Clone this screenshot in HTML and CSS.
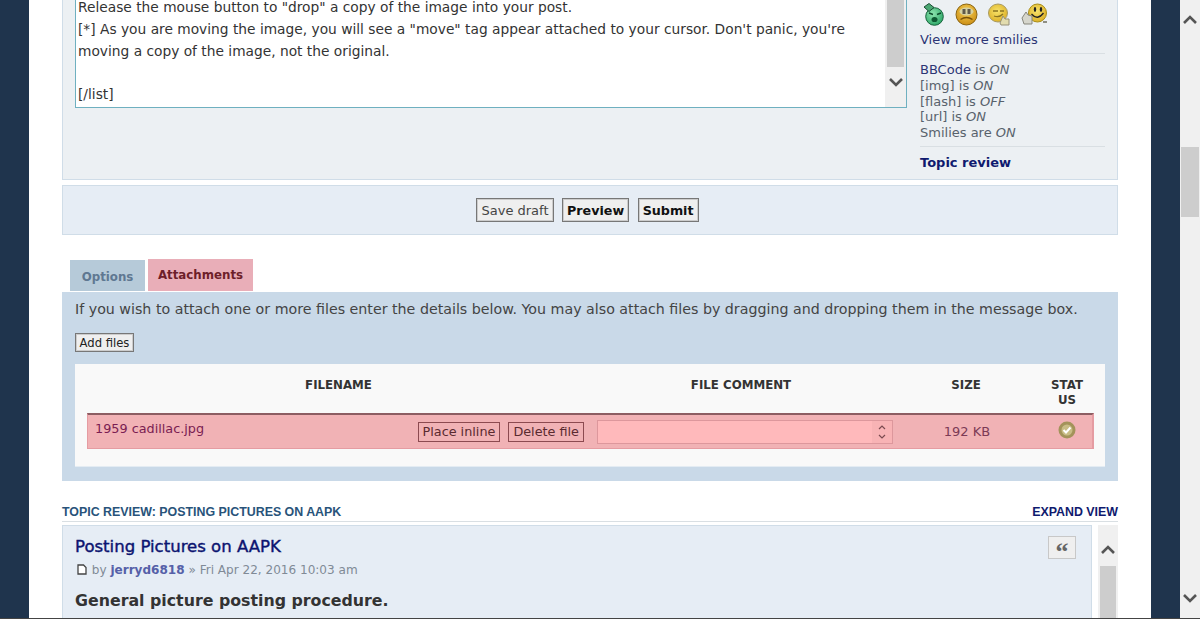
FILE: index.html
```html
<!DOCTYPE html>
<html lang="en">
<head>
    <meta charset="UTF-8">
    <meta name="viewport" content="width=device-width, initial-scale=1.0">
    <title>Post a reply</title>
    <link rel="stylesheet" href="styles.css">
</head>
<body>
<div class="page">
    <div class="side"></div>
    <div class="wrap">
        <!-- message box and smilies -->
        <div class="panel postPanel">
            <div class="message">
                <div class="messageText">
                    <p>Release the mouse button to "drop" a copy of the image into your post.</p>
                    <p>[*] As you are moving the image, you will see a "move" tag appear attached to your cursor. Don't panic, you're moving a copy of the image, not the original.</p>
                    <p>&nbsp;</p>
                    <p>[/list]</p>
                </div>
                <div class="miniScroll">
                    <div class="miniThumb"></div>
                    <svg class="arrow" width="16" height="10" viewBox="0 0 16 10"><path d="M2 2 L8 8 L14 2" fill="none" stroke="#555" stroke-width="2.6"/></svg>
                </div>
            </div>
            <div class="postSide">
                <div class="smilies">
                    <svg width="22" height="23" viewBox="0 0 22 23">
                        <defs>
                            <radialGradient id="green" cx=".4" cy=".35" r=".75"><stop offset="0" stop-color="#8fe6b0"/><stop offset="1" stop-color="#23a060"/></radialGradient>
                            <radialGradient id="orange" cx=".5" cy=".35" r=".7"><stop offset="0" stop-color="#f5cf55"/><stop offset="1" stop-color="#c98a10"/></radialGradient>
                            <radialGradient id="yellow" cx=".45" cy=".4" r=".7"><stop offset="0" stop-color="#f7e36a"/><stop offset="1" stop-color="#d9a91e"/></radialGradient>
                        </defs>
                        <circle cx="11.5" cy="13.5" r="8.8" fill="url(#green)" stroke="#17633c"/>
                        <path d="M1 4 L6 0.5 L11 4.5 L6 8.5 Z" fill="#4aa873" stroke="#1c4f35"/>
                        <path d="M6 10 L10 11.5 M14 11.5 L18 10" stroke="#0c4a2a" stroke-width="1.4"/>
                        <ellipse cx="11.5" cy="16.5" rx="3" ry="2.6" fill="#0e5a33"/>
                    </svg>
                    <svg width="23" height="23" viewBox="0 0 23 23">
                        <circle cx="11.5" cy="11.5" r="10.5" fill="url(#orange)" stroke="#8a6410"/>
                        <ellipse cx="11.5" cy="8.5" rx="7" ry="4" fill="#d8d2a0"/>
                        <rect x="7.5" y="6" width="3" height="5" fill="#5f5a4a"/>
                        <rect x="12.5" y="6" width="3" height="5" fill="#5f5a4a"/>
                        <path d="M5.5 16.5 Q11.5 12.5 17.5 16.5" fill="none" stroke="#7a5208" stroke-width="1.5"/>
                    </svg>
                    <svg width="23" height="23" viewBox="0 0 23 23">
                        <ellipse cx="10" cy="10" rx="9.5" ry="9" fill="url(#yellow)" stroke="#a89a60"/>
                        <path d="M5 8 H10 M12 8 H16" stroke="#8a7420" stroke-width="1.6"/>
                        <path d="M6 13 Q11 15 15 11" fill="none" stroke="#8a7420" stroke-width="1.3"/>
                        <path d="M12 20 L15 13 L17 16 L21 16 L21 22 L13 22 Z" fill="#e2dcae" stroke="#97917a"/>
                    </svg>
                    <svg width="27" height="22" viewBox="0 0 27 22">
                        <circle cx="16.5" cy="10" r="9" fill="url(#yellow)" stroke="#a88d14"/>
                        <ellipse cx="14" cy="6.5" rx="1.2" ry="2.4" fill="#222"/>
                        <ellipse cx="20" cy="6.5" rx="1.2" ry="2.4" fill="#222"/>
                        <path d="M10.5 11 Q16.5 18 22.5 10" fill="none" stroke="#222" stroke-width="1.3"/>
                        <path d="M1 15 L5 9 L7 12 L11 13 L11 21 L3 21 Z" fill="#d6d6cc" stroke="#87877d"/>
                        <path d="M22 19 L26 19" stroke="#8f8f85" stroke-width="2"/>
                    </svg>
                </div>
                <a class="link">View more smilies</a>
                <div class="status">
                    <div><a class="link">BBCode</a> is <em>ON</em></div>
                    <div>[img] is <em>ON</em></div>
                    <div>[flash] is <em>OFF</em></div>
                    <div>[url] is <em>ON</em></div>
                    <div>Smilies are <em>ON</em></div>
                </div>
                <a class="topicLink">Topic review</a>
            </div>
        </div>

        <!-- submit buttons -->
        <div class="panel buttonPanel">
            <button class="btn">Save draft</button>
            <button class="btn strong">Preview</button>
            <button class="btn strong">Submit</button>
        </div>

        <!-- tabs -->
        <ul class="tabs">
            <li>Options</li>
            <li class="active">Attachments</li>
        </ul>

        <!-- attachments -->
        <div class="attachPanel">
            <p class="attachInfo">If you wish to attach one or more files enter the details below. You may also attach files by dragging and dropping them in the message box.</p>
            <button class="btn addBtn">Add files</button>
            <div class="fileBox">
                <div class="fileGrid fileHead">
                    <div>FILENAME</div>
                    <div>FILE COMMENT</div>
                    <div>SIZE</div>
                    <div class="statusHead">STATUS</div>
                </div>
                <div class="fileGrid fileRow">
                    <div class="fileCell">
                        <span class="fileName">1959 cadillac.jpg</span>
                        <button class="btn pinkBtn">Place inline</button>
                        <button class="btn pinkBtn">Delete file</button>
                    </div>
                    <div class="comment">
                        <div class="spin">
                            <svg width="10" height="18" viewBox="0 0 10 18"><path d="M2 6 L5 3 L8 6 M2 12 L5 15 L8 12" fill="none" stroke="#7a4a50" stroke-width="1.2"/></svg>
                        </div>
                    </div>
                    <div class="size">192 KB</div>
                    <div class="check">
                        <svg width="18" height="18" viewBox="0 0 18 18"><circle cx="9" cy="9" r="8.5" fill="#a3935a"/><circle cx="9" cy="9" r="5.5" fill="#c9bd86"/><path d="M5.5 9 L8 11.5 L12.5 6.5" fill="none" stroke="#fff" stroke-width="2"/></svg>
                    </div>
                </div>
            </div>
        </div>

        <!-- topic review -->
        <div class="reviewHead">
            <span class="reviewTitle">TOPIC REVIEW: POSTING PICTURES ON AAPK</span>
            <a class="expand">EXPAND VIEW</a>
        </div>
        <div class="reviewBody">
            <div class="panel reviewPost">
                <div class="postTop">
                    <div>
                        <h3>Posting Pictures on AAPK</h3>
                        <div class="postMeta">
                            <svg width="10" height="11" viewBox="0 0 10 11"><path d="M1 1 H6.5 L9 3.5 V10 H1 Z" fill="#fff" stroke="#444" stroke-width="1.3"/></svg>
                            by <b>jerryd6818</b> » Fri Apr 22, 2016 10:03 am
                        </div>
                    </div>
                    <div class="quote">“</div>
                </div>
                <div class="postBody">General picture posting procedure.</div>
            </div>
            <div class="reviewScroll">
                <svg class="arrow" width="16" height="10" viewBox="0 0 16 10"><path d="M2 8 L8 2 L14 8" fill="none" stroke="#555" stroke-width="2.6"/></svg>
                <div class="reviewThumb"></div>
            </div>
        </div>
    </div>
    <div class="side"></div>
    <div class="pageScroll">
        <svg class="arrow" width="16" height="10" viewBox="0 0 16 10"><path d="M2 8 L8 2 L14 8" fill="none" stroke="#555" stroke-width="2.6"/></svg>
        <div class="pageThumb"></div>
        <svg class="arrow" width="16" height="10" viewBox="0 0 16 10"><path d="M2 2 L8 8 L14 2" fill="none" stroke="#555" stroke-width="2.6"/></svg>
    </div>
</div>
<div class="bottomLine"></div>
</body>
</html>
```

FILE: styles.css
```css
*{
    margin: 0;
    padding: 0;
    box-sizing: border-box;
}
ul, li{
    list-style: none;
}
html, body{
    height: 619px;
    overflow: hidden;
}
body{
    background: #fff;
    font-family: "DejaVu Sans", Verdana, sans-serif;
    font-size: 13px;
    color: #536482;
}
.page{
    display: flex;
    height: 618px;
    overflow: hidden;
}
.bottomLine{
    height: 1px;
    background: #444;
}
.side{
    width: 29px;
    background: #1f344d;
}
.wrap{
    width: 1122px;
    padding: 0 33px;
    overflow: hidden;
}
.panel{
    border: 1px solid #d0dde8;
}

/* message box */
.postPanel{
    height: 180px;
    background: #ecf0f3;
    padding-left: 12px;
    border-top: 0;
    display: flex;
}
.message{
    width: 832px;
    height: 108px;
    background: #fff;
    border: 1px solid #6fb0c0;
    border-top: 0;
    display: flex;
    overflow: hidden;
}
.messageText{
    flex: 1;
    padding: 0 2px 1px;
    color: #333;
    font-size: 13.78px;
    line-height: 21.7px;
    display: flex;
    flex-direction: column;
    justify-content: flex-end;
}
.miniScroll{
    width: 21px;
    background: #f0f0f0;
    padding: 0 2px;
    display: flex;
    flex-direction: column;
    align-items: center;
}
.miniThumb{
    width: 100%;
    height: 67px;
    background: #cdcdcd;
}
.arrow{
    display: block;
    flex: none;
}
.miniScroll .arrow{
    margin-top: 10px;
}
.postSide{
    width: 185px;
    margin-left: 13px;
    font-size: 13px;
    color: #58626c;
}
.smilies{
    height: 30px;
    padding: 3px 0 0 3px;
    display: flex;
    gap: 10px;
}
.link{
    color: #2c3575;
}
.postSide > .link{
    display: block;
    height: 24px;
    line-height: 20px;
    border-bottom: 1px solid #d9dfe3;
}
.status{
    padding: 8px 0 5px;
    line-height: 15.75px;
    border-bottom: 1px solid #d9dfe3;
}
.topicLink{
    display: block;
    margin-top: 8px;
    font-weight: bold;
    color: #0f1a6e;
}

/* submit buttons */
.buttonPanel{
    height: 50px;
    margin-top: 5px;
    padding-right: 5px;
    background: #e6edf5;
    display: flex;
    justify-content: center;
    align-items: center;
    gap: 8.5px;
}
.btn{
    font-family: "DejaVu Sans", Verdana, sans-serif;
    font-size: 13px;
    height: 24px;
    padding: 0 4px;
    color: #444;
    background: #efefef;
    border: 1px solid #777;
    box-shadow: 0 0 0 1px #ccc inset;
}
.strong{
    font-weight: bold;
    font-size: 12.7px;
    color: #111;
}

/* tabs */
.tabs{
    display: flex;
    align-items: flex-end;
    gap: 3px;
    height: 56px;
    padding-left: 8px;
}
.tabs li{
    height: 31px;
    width: 75px;
    background: #b6cad9;
    color: #5f7892;
    font-size: 11.8px;
    font-weight: bold;
    text-align: center;
    line-height: 34px;
}
.tabs li.active{
    height: 32px;
    width: 105px;
    background: #e9aeb8;
    color: #6e1f2a;
    line-height: 32px;
}

/* attachments */
.attachPanel{
    height: 189px;
    margin-top: 1px;
    padding: 8px 13px 0;
    background: #c9d9e8;
}
.attachInfo{
    font-size: 14.22px;
    line-height: 18px;
    color: #444;
    white-space: nowrap;
}
.addBtn{
    display: block;
    height: 19px;
    width: 59px;
    padding: 0;
    margin-top: 15px;
    font-size: 11.6px;
    color: #222;
}
.fileBox{
    height: 103px;
    margin-top: 12px;
    padding: 0 11px 0 12px;
    background: #f9f9f9;
    border-bottom: 1px solid #e4ecf3;
}
.fileGrid{
    display: grid;
    grid-template-columns: 503px 302px 148px 54px;
    text-align: center;
}
.fileHead{
    height: 49px;
    padding-top: 14px;
    font-size: 11.8px;
    font-weight: bold;
    line-height: 15px;
    color: #333;
}
.statusHead{
    padding: 0 10px;
    word-break: break-all;
}
.fileRow{
    height: 36px;
    grid-template-columns: 502px 303px 148px 51px;
    background: #f1b2b5;
    border: 1px solid #e59ca2;
    border-top: 2px solid #8c5d62;
    border-right: 2px solid #e59ca2;
    align-items: center;
    color: #7c3a55;
}
.fileCell{
    display: flex;
    align-items: center;
    padding-left: 7px;
    gap: 8px;
}
.fileName{
    margin-right: auto;
    margin-top: -6px;
    font-size: 12.8px;
    color: #7a1d52;
}
.pinkBtn{
    height: 20px;
    padding: 0 4px;
    font-size: 12.8px;
    background: #f1b2b5;
    border: 1px solid #8c4a50;
    box-shadow: none;
    color: #5a2a30;
}
.fileCell .pinkBtn:last-child{
    margin-right: 6px;
}
.comment{
    width: 296px;
    height: 24px;
    justify-self: end;
    background: #ffb9bb;
    border: 1px solid #dd979c;
    display: flex;
    justify-content: flex-end;
}
.spin{
    width: 20px;
    background: #f8b3b5;
    display: flex;
    justify-content: center;
    align-items: center;
}
.size{
    font-size: 13px;
}
.check{
    display: flex;
    justify-content: center;
    margin-top: -4px;
}

/* topic review */
.reviewHead{
    height: 41px;
    padding-top: 24px;
    display: flex;
    justify-content: space-between;
    border-bottom: 1px solid #d9dfe3;
    font-family: "Liberation Sans", Arial, sans-serif;
    font-size: 12.4px;
    line-height: 15px;
    font-weight: bold;
}
.reviewTitle{
    color: #28537a;
}
.expand{
    color: #0f1a6e;
}
.reviewBody{
    display: flex;
    justify-content: space-between;
    margin-top: 3px;
    height: 95px;
}
.reviewPost{
    width: 1030px;
    height: 100px;
    background: #e6edf5;
    padding: 10px 15px 0 12px;
}
.postTop{
    display: flex;
    justify-content: space-between;
}
.reviewPost h3{
    font-size: 16.55px;
    font-weight: normal;
    -webkit-text-stroke: .4px #0c1470;
    line-height: 22px;
    color: #0c1470;
}
.postMeta{
    font-size: 12.05px;
    line-height: 16px;
    margin-top: 4px;
    color: #808a96;
}
.postMeta svg{
    margin: 0 1px 0 2px;
    vertical-align: -1px;
}
.postMeta b{
    color: #5560a8;
}
.quote{
    width: 28px;
    height: 23px;
    background: #efefef;
    border: 1px solid #c8c8c8;
    text-align: center;
    font-family: "Liberation Serif", serif;
    font-size: 26px;
    font-weight: bold;
    line-height: 30px;
    color: #666;
}
.postBody{
    margin-top: 12px;
    font-size: 15.8px;
    line-height: 22px;
    font-weight: bold;
    color: #333;
}
.reviewScroll{
    width: 20px;
    background: #f0f0f0;
    padding: 0 2px;
    display: flex;
    flex-direction: column;
    align-items: center;
}
.reviewScroll .arrow{
    margin: 20px 0 11px;
}
.reviewThumb{
    width: 100%;
    height: 60px;
    background: #cdcdcd;
}

/* browser scrollbar */
.pageScroll{
    width: 20px;
    background: #f0f0f0;
    display: flex;
    flex-direction: column;
    align-items: center;
    padding: 15px 1px 15px;
}
.pageThumb{
    width: 100%;
    height: 70px;
    margin: 122px 0 auto;
    background: #cdcdcd;
}
```
